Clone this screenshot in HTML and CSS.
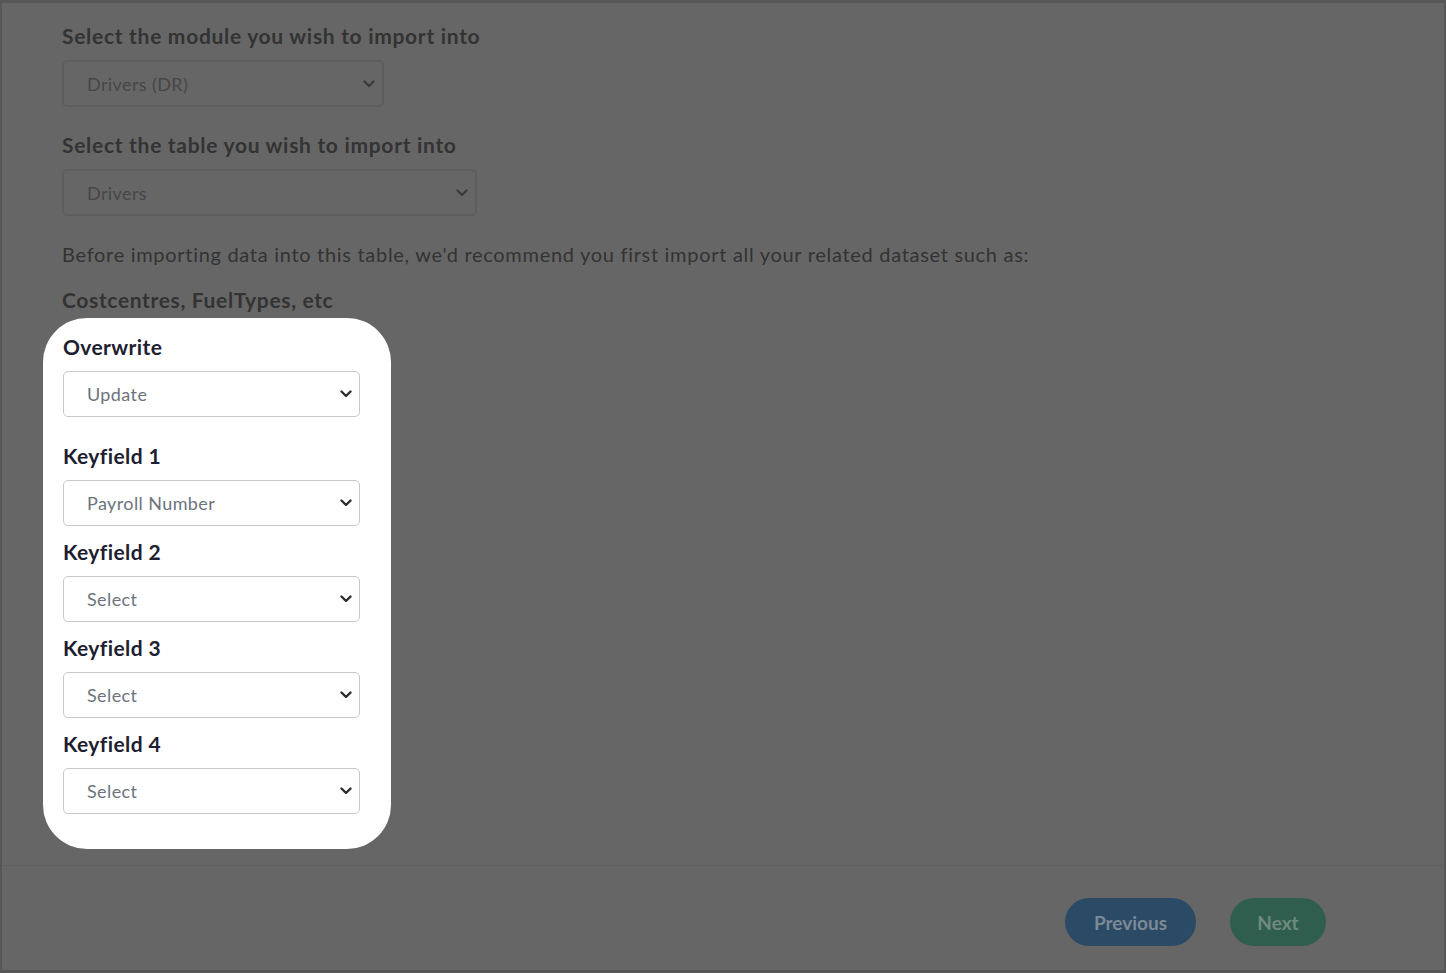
FILE: index.html
```html
<!DOCTYPE html>
<html lang="en">
<head>
    <meta charset="UTF-8">
    <meta name="viewport" content="width=device-width, initial-scale=1.0">
    <title>Import Wizard</title>
    <link rel="stylesheet" href="styles.css">
</head>
<body>
    <div class="frame">
        <div class="content">
            <h2 class="field-title">Select the module you wish to import into</h2>
            <div class="select dim module-select">
                <span>Drivers (DR)</span>
                <svg width="12" height="8" viewBox="0 0 12 8"><path d="M1.5 1.5 L6 6 L10.5 1.5" fill="none" stroke="currentColor" stroke-width="2.2" stroke-linecap="round" stroke-linejoin="round"/></svg>
            </div>

            <h2 class="field-title spaced">Select the table you wish to import into</h2>
            <div class="select dim table-select">
                <span>Drivers</span>
                <svg width="12" height="8" viewBox="0 0 12 8"><path d="M1.5 1.5 L6 6 L10.5 1.5" fill="none" stroke="currentColor" stroke-width="2.2" stroke-linecap="round" stroke-linejoin="round"/></svg>
            </div>

            <p class="note">Before importing data into this table, we'd recommend you first import all your related dataset such as:</p>
            <p class="related">Costcentres, FuelTypes, etc</p>

            <!-- highlighted block -->
            <div class="spotlight">
                <label class="panel-label">Overwrite</label>
                <div class="select">
                    <span>Update</span>
                    <svg width="12" height="8" viewBox="0 0 12 8"><path d="M1.5 1.5 L6 6 L10.5 1.5" fill="none" stroke="currentColor" stroke-width="2.4" stroke-linecap="round" stroke-linejoin="round"/></svg>
                </div>

                <label class="panel-label first-key">Keyfield 1</label>
                <div class="select">
                    <span>Payroll Number</span>
                    <svg width="12" height="8" viewBox="0 0 12 8"><path d="M1.5 1.5 L6 6 L10.5 1.5" fill="none" stroke="currentColor" stroke-width="2.4" stroke-linecap="round" stroke-linejoin="round"/></svg>
                </div>

                <label class="panel-label">Keyfield 2</label>
                <div class="select">
                    <span>Select</span>
                    <svg width="12" height="8" viewBox="0 0 12 8"><path d="M1.5 1.5 L6 6 L10.5 1.5" fill="none" stroke="currentColor" stroke-width="2.4" stroke-linecap="round" stroke-linejoin="round"/></svg>
                </div>

                <label class="panel-label">Keyfield 3</label>
                <div class="select">
                    <span>Select</span>
                    <svg width="12" height="8" viewBox="0 0 12 8"><path d="M1.5 1.5 L6 6 L10.5 1.5" fill="none" stroke="currentColor" stroke-width="2.4" stroke-linecap="round" stroke-linejoin="round"/></svg>
                </div>

                <label class="panel-label">Keyfield 4</label>
                <div class="select">
                    <span>Select</span>
                    <svg width="12" height="8" viewBox="0 0 12 8"><path d="M1.5 1.5 L6 6 L10.5 1.5" fill="none" stroke="currentColor" stroke-width="2.4" stroke-linecap="round" stroke-linejoin="round"/></svg>
                </div>
            </div>
        </div>

        <div class="footer">
            <button class="btn btn-prev">Previous</button>
            <button class="btn btn-next">Next</button>
        </div>
    </div>
</body>
</html>
```

FILE: styles.css
```css
body {
    margin: 0;
    font-family: 'Lato', 'Noto Sans', sans-serif;
    background-color: #575757;
}

.frame {
    height: 973px;
    box-sizing: border-box;
    border: 2px solid #575757;
    border-top-width: 3px;
    border-bottom-width: 3px;
    background-color: #666;
    display: flex;
    flex-direction: column;
}

.content {
    flex: 1;
    padding: 21px 0 0 60px;
}

.field-title {
    margin: 0 0 12px;
    font-size: 21px;
    line-height: 24px;
    font-weight: 700;
    letter-spacing: 0.7px;
    color: #333;
}

.field-title.spaced {
    margin-top: 26px;
}

.select {
    box-sizing: border-box;
    height: 46px;
    width: 297px;
    display: flex;
    align-items: center;
    justify-content: space-between;
    padding: 0 7px 0 23px;
    border: 1px solid #c8c8c8;
    border-radius: 5px;
    background-color: #fff;
    font-size: 18px;
    letter-spacing: 0.4px;
    color: #6c737c;
}

.select svg {
    color: #2e2e2e;
}

.select.dim {
    height: 47px;
    background-color: #666;
    border: 2px solid #5e5e5e;
    color: #474747;
}

.select.dim svg {
    color: #3a3a3a;
}

.module-select {
    width: 322px;
}

.table-select {
    width: 415px;
}

.note {
    margin: 26px 0 0;
    font-size: 20px;
    line-height: 24px;
    letter-spacing: 0.7px;
    color: #333;
}

.related {
    margin: 22px 0 0;
    font-size: 21px;
    line-height: 24px;
    font-weight: 700;
    letter-spacing: 0.65px;
    color: #333;
}

.spotlight {
    width: 348px;
    box-sizing: border-box;
    margin: 6px 0 0 -19px;
    padding: 17px 31px 35px 20px;
    background-color: #fff;
    border-radius: 44px;
}

.panel-label {
    display: block;
    margin: 14px 0 12px;
    font-size: 21px;
    line-height: 24px;
    font-weight: 700;
    letter-spacing: 0.4px;
    color: #1d2030;
}

.panel-label:first-child {
    margin-top: 0;
}

.panel-label.first-key {
    margin-top: 27px;
}

.footer {
    height: 105px;
    box-sizing: border-box;
    border-top: 1px solid #606060;
    display: flex;
    justify-content: flex-end;
    align-items: flex-start;
    gap: 34px;
    padding: 32px 118px 0 0;
}

.btn {
    height: 48px;
    border: none;
    border-radius: 24px;
    font-family: 'Lato', 'Noto Sans', sans-serif;
    font-size: 19px;
    font-weight: 700;
    cursor: pointer;
}

.btn-prev {
    width: 131px;
    background-color: #2b4a65;
    color: #7c8996;
}

.btn-next {
    width: 96px;
    background-color: #2f5e4f;
    color: #6f8a7e;
}
```
